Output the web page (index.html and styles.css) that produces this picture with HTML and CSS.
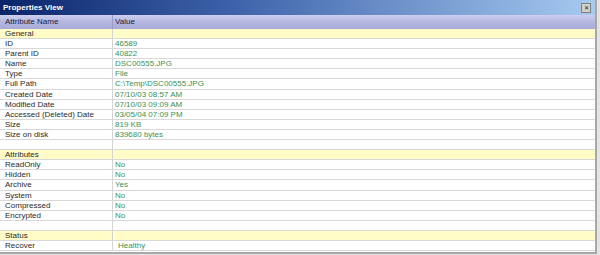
FILE: index.html
```html
<!DOCTYPE html>
<html lang="en">
<head>
<meta charset="UTF-8">
<title>Properties View</title>
<link rel="stylesheet" href="styles.css">
</head>
<body>
<div class="panel">
  <div class="titlebar">
    <span class="title">Properties View</span>
    <span class="close">&#x2715;</span>
  </div>
  <div class="grid">
    <div class="row head"><div class="cell">Attribute Name</div><div class="cell">Value</div></div>

    <div class="row group"><div class="cell">General</div><div class="cell"></div></div>
    <div class="row"><div class="cell">ID</div><div class="cell val">46589</div></div>
    <div class="row"><div class="cell">Parent ID</div><div class="cell val">40822</div></div>
    <div class="row"><div class="cell">Name</div><div class="cell val">DSC00555.JPG</div></div>
    <div class="row"><div class="cell">Type</div><div class="cell val">File</div></div>
    <div class="row"><div class="cell">Full Path</div><div class="cell val">C:\Temp\DSC00555.JPG</div></div>
    <div class="row"><div class="cell">Created Date</div><div class="cell val">07/10/03 08:57 AM</div></div>
    <div class="row"><div class="cell">Modified Date</div><div class="cell val">07/10/03 09:09 AM</div></div>
    <div class="row"><div class="cell">Accessed (Deleted) Date</div><div class="cell val">03/05/04 07:09 PM</div></div>
    <div class="row"><div class="cell">Size</div><div class="cell val">819 KB</div></div>
    <div class="row"><div class="cell">Size on disk</div><div class="cell val">839680 bytes</div></div>
    <div class="row"><div class="cell"></div><div class="cell"></div></div>

    <div class="row group"><div class="cell">Attributes</div><div class="cell"></div></div>
    <div class="row"><div class="cell">ReadOnly</div><div class="cell val">No</div></div>
    <div class="row"><div class="cell">Hidden</div><div class="cell val">No</div></div>
    <div class="row"><div class="cell">Archive</div><div class="cell val">Yes</div></div>
    <div class="row"><div class="cell">System</div><div class="cell val">No</div></div>
    <div class="row"><div class="cell">Compressed</div><div class="cell val">No</div></div>
    <div class="row"><div class="cell">Encrypted</div><div class="cell val">No</div></div>
    <div class="row"><div class="cell"></div><div class="cell"></div></div>

    <div class="row group"><div class="cell">Status</div><div class="cell"></div></div>
    <div class="row"><div class="cell">Recover</div><div class="cell val indent">Healthy</div></div>
  </div>
</div>
</body>
</html>
```

FILE: styles.css
```css
body {
  margin: 0;
  background: #e4e4e4;
  font-family: "Liberation Sans", Arial, sans-serif;
  font-size: 8px;
  color: #2a2a2a;
}
.panel {
  width: 595px;
  height: 252px;
  background: #fff;
  border-right: 2px solid #a8a8a8;
  border-bottom: 2px solid #a8a8a8;
  overflow: hidden;
}
.titlebar {
  height: 15px;
  display: flex;
  align-items: center;
  justify-content: space-between;
  padding: 0 4px 0 3px;
  background: linear-gradient(90deg, #0a246a 0%, #3f64ab 40%, #a6caf0 100%);
}
.title {
  color: #fff;
  font-weight: bold;
  font-size: 8px;
}
.close {
  width: 8px;
  height: 8px;
  background: #d4d0c8;
  border: 1px solid #808080;
  color: #222;
  font-size: 6px;
  line-height: 8px;
  text-align: center;
}
.row {
  display: grid;
  grid-template-columns: 112px 1fr;
  height: 9.1px;
  border-bottom: 1px solid #d8d8d8;
}
.cell {
  padding-left: 5px;
  line-height: 10px;
  white-space: nowrap;
  overflow: hidden;
}
.cell + .cell {
  border-left: 1px solid #d4d4d4;
  padding-left: 2px;
}
.row.head {
  height: 14px;
  border-bottom: none;
  background: linear-gradient(180deg, #cfd0ee 0%, #b9bae3 40%, #a7aad8 100%);
  color: #1a1a3a;
}
.row.head .cell {
  line-height: 14px;
}
.row.head .cell + .cell {
  border-left: 1px solid #9a9cc8;
}
.row.group {
  background: #fffcc8;
}
.val {
  color: #3a9152;
}
.indent {
  padding-left: 5px !important;
}
```
